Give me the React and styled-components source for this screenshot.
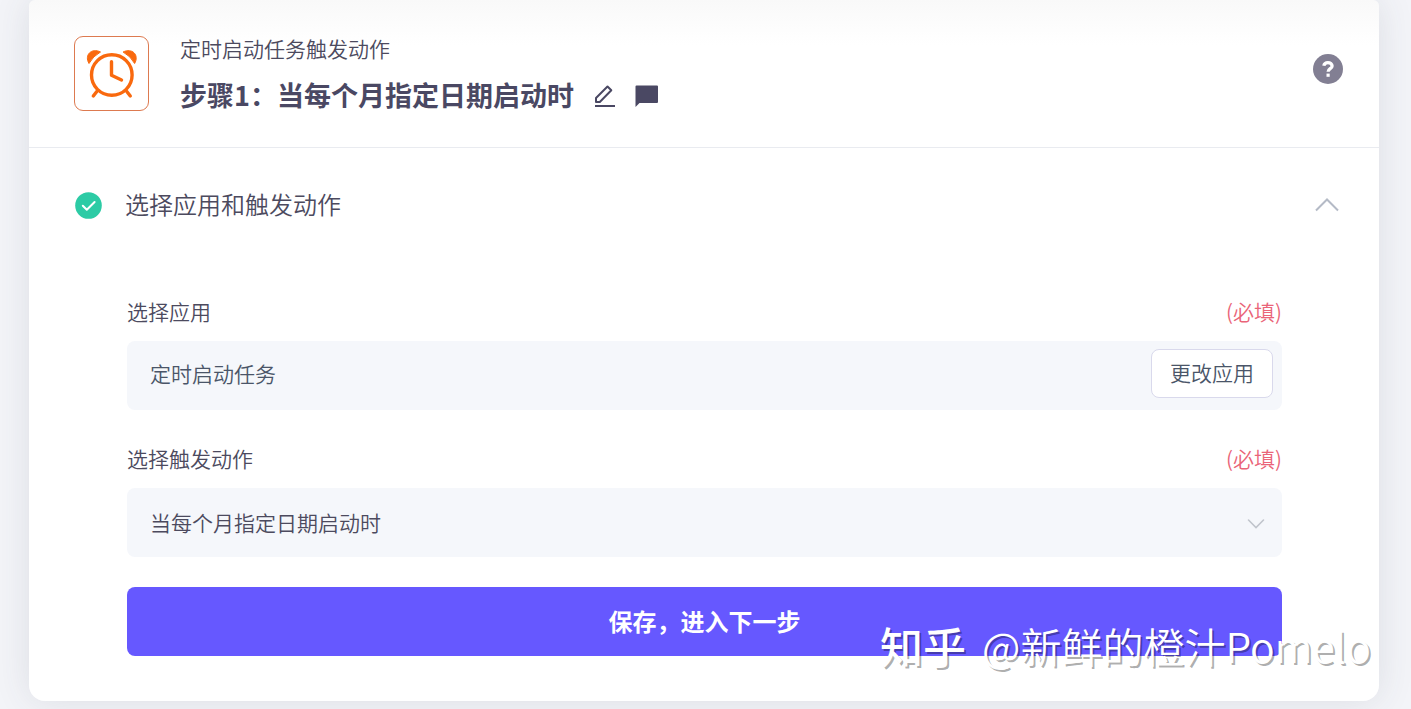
import React, { useState } from "react";
import styled, { createGlobalStyle } from "styled-components";

const colors = {
  text: "#4c4a5e",
  heading: "#4a4863",
  value: "#4a5568",
  primary: "#6658ff",
  required: "#ea6478",
  success: "#2ccba5",
  orange: "#f9690e",
  field: "#f5f7fb",
  line: "#e9ebf0"
};

const GlobalStyle = createGlobalStyle`
  * {
    box-sizing: border-box;
  }

  body {
    margin: 0;
    background: #f3f4f8;
    color: ${colors.text};
    font-family: "Noto Sans CJK SC", "Liberation Sans", sans-serif;
    font-size: 21px;
    font-weight: 350;
    line-height: 30px;
  }

  button, input, select {
    font: inherit;
    color: inherit;
  }
`;

const Page = styled.div`
  position: relative;
  padding: 0 32px 8px 29px;
  overflow: hidden;
`;

const Card = styled.main`
  background: linear-gradient(#f9f9f9, #ffffff 45px);
  border-radius: 6px 6px 16px 16px;
  box-shadow: 0 0 36px rgba(60, 65, 80, 0.12);
`;

const Header = styled.header`
  display: flex;
  align-items: flex-start;
  height: 148px;
  padding: 33px 36px 0 45px;
  border-bottom: 1px solid ${colors.line};
`;

const AppIcon = styled.div`
  width: 75px;
  height: 75px;
  margin: 3px 31px 0 0;
  border: 1px solid #dd7a50;
  border-radius: 9px;
  background: #ffffff;
`;

const HeaderText = styled.div`
  display: flex;
  flex: 1;
  flex-direction: column;
  gap: 12px;
`;

const TitleRow = styled.div`
  display: flex;
  align-items: center;
  gap: 18px;
`;

const Title = styled.h1`
  margin: 0;
  color: ${colors.heading};
  font-size: 27px;
  font-weight: 700;
  line-height: 40px;
`;

const IconButton = styled.button`
  display: flex;
  padding: 0;
  border: 0;
  background: none;
  color: ${props => props.$color || colors.heading};
  cursor: pointer;
`;

const HelpButton = styled(IconButton)`
  margin-top: 21px;
`;

const SectionHeader = styled.button`
  display: flex;
  align-items: center;
  width: 100%;
  height: 114px;
  padding: 0 40px 0 46px;
  border: 0;
  background: none;
  text-align: left;
  cursor: pointer;
`;

const SectionTitle = styled.span`
  flex: 1;
  margin-left: 23px;
  padding-bottom: 2px;
  font-size: 24px;
  line-height: 36px;
`;

const Form = styled.form`
  display: flex;
  flex-direction: column;
  gap: 30px;
  padding: 34px 97px 45px 98px;
`;

const Field = styled.div`
  display: flex;
  flex-direction: column;
  gap: 15px;
  padding-bottom: ${props => (props.$spaced ? "3px" : "0")};
`;

const FieldHead = styled.div`
  display: flex;
  justify-content: space-between;
`;

const Required = styled.span`
  color: ${colors.required};
`;

const Control = styled.div`
  display: flex;
  align-items: center;
  height: 69px;
  padding-right: ${props => props.$right};
  border-radius: 8px;
  background: ${colors.field};
`;

const TextInput = styled.input`
  flex: 1;
  min-width: 0;
  height: 100%;
  padding: 0 23px 5px;
  border: 0;
  outline: 0;
  background: none;
  color: ${colors.value};
`;

const Select = styled.select`
  flex: 1;
  min-width: 0;
  height: 100%;
  padding: 0 23px 2px;
  border: 0;
  outline: 0;
  appearance: none;
  background: none;
`;

const ChangeButton = styled.button`
  height: 49px;
  margin-bottom: 4px;
  padding: 0 18px 4px;
  border: 1px solid #d9d9ec;
  border-radius: 8px;
  background: #ffffff;
  color: ${colors.value};
  cursor: pointer;
`;

const SubmitButton = styled.button`
  height: 69px;
  padding-bottom: 3px;
  border: 0;
  border-radius: 8px;
  background: ${colors.primary};
  color: #ffffff;
  font-size: 24px;
  font-weight: 700;
  cursor: pointer;
`;

/**
 * Signature laid over the bottom right corner of the page
 */
const Watermark = styled.div`
  position: absolute;
  right: 40px;
  bottom: 34px;
  display: flex;
  gap: 16px;
  color: #ffffff;
  font-size: 41px;
  line-height: 60px;
  text-shadow: 2px 2px 0 rgba(0, 0, 0, 0.32);
  white-space: nowrap;
  pointer-events: none;
`;

const WatermarkBrand = styled.span`
  font-size: 43px;
  font-weight: 500;
`;

const AlarmIcon = () => (
  <svg width="73" height="73" viewBox="0 0 73 73" fill="none" stroke={colors.orange}>
    <circle cx="36.800" cy="38" r="20.300" strokeWidth="3.400" />
    <path d="M36.500 24.700v13.500l10 4.800" strokeWidth="3.400" strokeLinecap="round" strokeLinejoin="round" />
    <path d="M21.800 54.500l-3.500 4.500M51.800 54.500l3.500 4.500" strokeWidth="3.400" strokeLinecap="round" />
    <path
      d="M14 26.500C9 18 16.500 10.500 25.500 15Q18 19 14 26.500zM59.600 26.500C64.600 18 57.100 10.500 48.100 15Q55.600 19 59.600 26.500z"
      fill={colors.orange}
      strokeWidth="1"
      strokeLinejoin="round"
    />
  </svg>
);

const EditIcon = () => (
  <svg width="24" height="24" viewBox="0 0 24 24" fill="none" stroke="currentColor" strokeWidth="2">
    <path d="M3 23h20" />
    <path d="M4 19v-4L15.500 3.500l3.800 3.800L7.800 19z" strokeLinejoin="round" />
  </svg>
);

const CommentIcon = () => (
  <svg width="24" height="24" viewBox="0 0 24 24" fill="currentColor">
    <path d="M2.500 2.500H23q1 0 1 1v15.500q0 1-1 1H5.500l-4 4V3.500q0-1 1-1z" />
  </svg>
);

const HelpIcon = () => (
  <svg width="30" height="30" viewBox="0 0 30 30" fill="none">
    <circle cx="15" cy="15" r="15" fill="currentColor" />
    <path
      d="M10.800 11.800c.4-2 1.900-3.200 4.100-3.200 2.400 0 4.200 1.300 4.200 3.300 0 2.900-4 2.700-4 5.900"
      stroke="#ffffff"
      strokeWidth="3.300"
    />
    <path d="M13.500 19.600h3.200v3.200h-3.200z" fill="#ffffff" />
  </svg>
);

const CheckIcon = () => (
  <svg width="27" height="27" viewBox="0 0 27 27" fill="none">
    <circle cx="13.500" cy="13.500" r="13.300" fill={colors.success} />
    <path d="M7.800 13.800l4 4 7.800-7.800" stroke="#ffffff" strokeWidth="2" strokeLinecap="round" strokeLinejoin="round" />
  </svg>
);

const ChevronUp = () => (
  <svg width="24" height="14" viewBox="0 0 24 14" fill="none" stroke="#b4bac6" strokeWidth="2">
    <path d="M1 12.500l11-11 11 11" />
  </svg>
);

const ChevronDown = () => (
  <svg width="18" height="12" viewBox="0 0 18 12" fill="none" stroke="#c0c4cc" strokeWidth="1.600">
    <path d="M1.500 3l7.500 7.500 7.500-7.500" strokeLinecap="round" />
  </svg>
);

const App = () => {
  const [isOpen, setIsOpen] = useState(true);

  return (
    <React.Fragment>
      <GlobalStyle />
      <Page>
        <Card>
          <Header>
            <AppIcon>
              <AlarmIcon />
            </AppIcon>
            <HeaderText>
              <span>定时启动任务触发动作</span>
              <TitleRow>
                <Title>步骤1：当每个月指定日期启动时</Title>
                <IconButton type="button" aria-label="编辑">
                  <EditIcon />
                </IconButton>
                <IconButton type="button" aria-label="备注">
                  <CommentIcon />
                </IconButton>
              </TitleRow>
            </HeaderText>
            <HelpButton type="button" aria-label="帮助" $color="#827f93">
              <HelpIcon />
            </HelpButton>
          </Header>
          <SectionHeader type="button" aria-expanded={isOpen} onClick={() => setIsOpen(!isOpen)}>
            <CheckIcon />
            <SectionTitle>选择应用和触发动作</SectionTitle>
            <ChevronUp />
          </SectionHeader>
          {isOpen && (
            <Form onSubmit={e => e.preventDefault()}>
              <Field $spaced>
                <FieldHead>
                  <label htmlFor="app">选择应用</label>
                  <Required>(必填)</Required>
                </FieldHead>
                <Control $right="9px">
                  <TextInput id="app" value="定时启动任务" readOnly />
                  <ChangeButton type="button">更改应用</ChangeButton>
                </Control>
              </Field>
              <Field>
                <FieldHead>
                  <label htmlFor="trigger">选择触发动作</label>
                  <Required>(必填)</Required>
                </FieldHead>
                <Control $right="17px">
                  <Select id="trigger" defaultValue="monthly">
                    <option value="monthly">当每个月指定日期启动时</option>
                  </Select>
                  <ChevronDown />
                </Control>
              </Field>
              <SubmitButton type="submit">保存，进入下一步</SubmitButton>
            </Form>
          )}
        </Card>
        <Watermark>
          <WatermarkBrand>知乎</WatermarkBrand>
          <span>@新鲜的橙汁Pomelo</span>
        </Watermark>
      </Page>
    </React.Fragment>
  );
};

export default App;
